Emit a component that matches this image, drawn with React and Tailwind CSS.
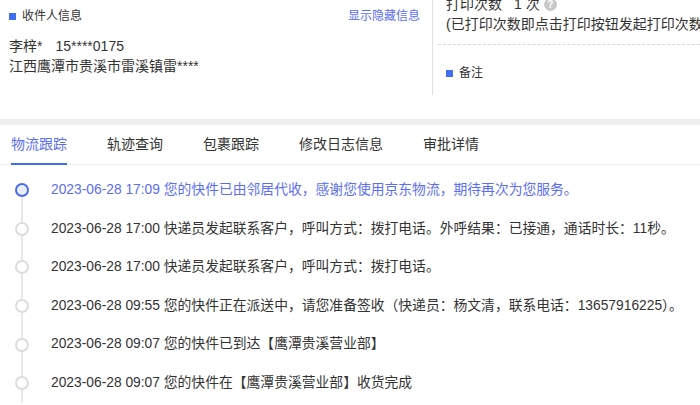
import React from 'react';

const font = { fontFamily: '"Liberation Sans", "Noto Sans CJK SC", sans-serif' };

const tabs = ['物流跟踪', '轨迹查询', '包裹跟踪', '修改日志信息', '审批详情'];

const events = [
  '2023-06-28 17:09 您的快件已由邻居代收，感谢您使用京东物流，期待再次为您服务。',
  '2023-06-28 17:00 快递员发起联系客户，呼叫方式：拨打电话。外呼结果：已接通，通话时长：11秒。',
  '2023-06-28 17:00 快递员发起联系客户，呼叫方式：拨打电话。',
  '2023-06-28 09:55 您的快件正在派送中，请您准备签收（快递员：杨文清，联系电话：13657916225）。',
  '2023-06-28 09:07 您的快件已到达【鹰潭贵溪营业部】',
  '2023-06-28 09:07 您的快件在【鹰潭贵溪营业部】收货完成',
];

export default function App() {
  return (
    <div className="w-[700px] h-[405px] overflow-hidden bg-white text-[#333]" style={font}>
      {/* top info */}
      <div className="flex h-[119px]">
        <div className="w-[432px] pl-[9px] pr-[12px] pt-[7px]">
          <div className="flex items-center justify-between h-[18px] text-[12px]">
            <div className="flex items-center">
              <span className="w-[7px] h-[7px] bg-[#3f6ff0] mr-[6px]" />
              <span>收件人信息</span>
            </div>
            <span className="text-[#5b6ef5]">显示隐藏信息</span>
          </div>
          <div className="mt-[11px] text-[14px] leading-[20px]">
            <div>
              李梓*<span className="ml-[13px]">15****0175</span>
            </div>
            <div>江西鹰潭市贵溪市雷溪镇雷****</div>
          </div>
        </div>
        <div className="flex-1 h-[95px] border-l border-[#e0e0e0] pl-[13px] overflow-hidden">
          <div className="-mt-[6px] text-[14px] leading-[20px] whitespace-nowrap">
            <div className="flex items-center">
              打印次数<span className="ml-[12px]">1 次</span>
              <span className="ml-[4px] w-[13px] h-[13px] rounded-full bg-[#c8c8c8] text-white text-[10px] leading-[13px] text-center font-bold">?</span>
            </div>
            <div>(已打印次数即点击打印按钮发起打印次数)</div>
          </div>
          <div className="mt-[10px] border-t border-dashed border-[#d9d9d9] -ml-[8px]" />
          <div className="flex items-center mt-[20px] text-[12px] h-[16px]">
            <span className="w-[7px] h-[7px] bg-[#3f6ff0] mr-[6px]" />
            <span>备注</span>
          </div>
        </div>
      </div>

      <div className="h-[6px] bg-[#eeeeee]" />

      {/* tabs */}
      <div className="flex h-[40px] border-b border-[#eeeeee] pl-[11px] text-[14px]">
        {tabs.map((t, i) => (
          <div
            key={t}
            className={`relative flex items-center mr-[40px] ${i === 0 ? 'text-[#5b6ef5]' : 'text-[#333]'}`}
          >
            {t}
            {i === 0 && <span className="absolute left-0 right-0 -bottom-px h-[2px] bg-[#3f6ff0]" />}
          </div>
        ))}
      </div>

      {/* timeline */}
      <div className="relative pt-[6px]">
        <span className="absolute left-[21px] top-[24px] bottom-0 w-[2px] bg-[#e8e8e8]" />
        {events.map((e, i) => (
          <div key={i} className="relative flex items-center h-[38.6px]">
            <span
              className={`ml-[15px] w-[14px] h-[14px] rounded-full border-2 ${
                i === 0 ? 'border-[#4a6cf0] bg-[#e8eefc]' : 'border-[#dcdcdc] bg-white'
              }`}
            />
            <span
              className={`ml-[22px] text-[13.8px] whitespace-nowrap ${
                i === 0 ? 'text-[#5b6ef5]' : 'text-[#333]'
              }`}
            >
              {e}
            </span>
          </div>
        ))}
      </div>
    </div>
  );
}
